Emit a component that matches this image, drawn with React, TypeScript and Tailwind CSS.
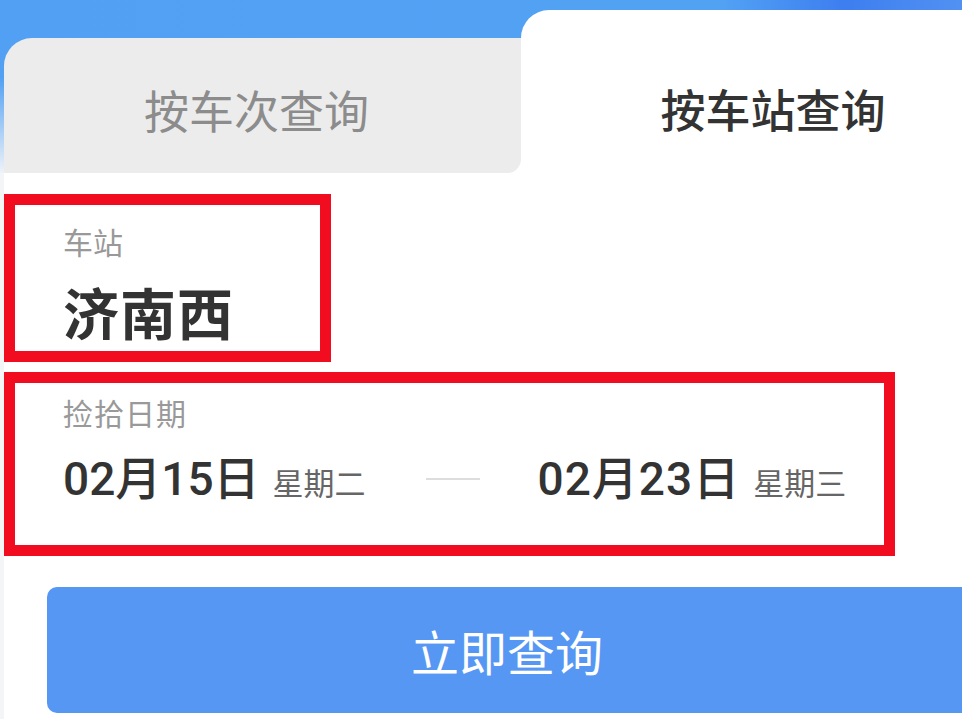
import React from "react";

const font = { fontFamily: '"Noto Sans CJK SC", "Noto Sans", sans-serif' };
const dateFont = { fontFamily: 'Roboto, "Noto Sans CJK SC", sans-serif' };

export default function App() {
  return (
    <div
      className="w-[962px] h-[719px] overflow-hidden bg-[#f4f5f7] relative"
      style={font}
    >
      {/* Header with tabs */}
      <div className="h-[173px] w-[1030px] flex items-end pl-[4px] bg-[linear-gradient(to_bottom,rgba(238,243,249,0)_45%,#eef3f9_100%),linear-gradient(to_right,#52a0f3_0%,#52a2f4_70%,#3d7ef0_82%,#4f8ff2_92%,#5d9ef3_100%)]">
        <div className="w-[517px] h-[135px] shrink-0 bg-[linear-gradient(to_bottom,transparent_50%,#ffffff_50%)]">
          <div className="h-full w-full bg-[#ececec] rounded-tl-[28px] rounded-br-[14px] flex items-end justify-center pb-[41px]">
            <span className="text-[45px] leading-[45px] text-[#8c8c8c] pl-[6px] pr-[18px]">
              按车次查询
            </span>
          </div>
        </div>
        <div className="w-[500px] h-[163px] shrink-0 bg-white rounded-tl-[28px] flex items-end justify-center pb-[42px]">
          <span className="text-[45px] leading-[45px] text-[#333333] font-medium pl-[4px]">
            按车站查询
          </span>
        </div>
      </div>

      {/* Body */}
      <div className="ml-[4px] w-[1016px] h-[546px] bg-white pt-[21px]">
        <div className="w-[327px] h-[168px] border-[11px] border-[#f20c1f] pl-[48px] pt-[21px]">
          <div className="text-[30px] leading-[30px] text-[#999999]">车站</div>
          <div className="mt-[27px] text-[56px] leading-[56px] font-bold text-[#333333] tracking-[1px]">
            济南西
          </div>
        </div>

        <div className="mt-[10px] w-[891px] h-[184px] border-[11px] border-[#f20c1f] pl-[48px] pt-[14px]">
          <div className="text-[30px] leading-[30px] text-[#999999] tracking-[1px]">捡拾日期</div>
          <div className="mt-[29px] flex items-baseline h-[46px]">
            <span
              className="text-[46px] leading-[46px] font-medium text-[#333333]"
              style={dateFont}
            >
              02月15日
            </span>
            <span className="ml-[13px] text-[31px] leading-[31px] text-[#666666]">星期二</span>
            <div className="self-center ml-[60px] w-[54px] h-[2px] bg-[#dddddd]" />
            <span
              className="ml-[58px] text-[46px] leading-[46px] font-medium text-[#333333] tracking-[1px]"
              style={dateFont}
            >
              02月23日
            </span>
            <span className="ml-[13px] text-[31px] leading-[31px] text-[#666666]">星期三</span>
          </div>
        </div>

        <div className="mt-[31px] ml-[43px] w-[926px] h-[126px] rounded-[10px] bg-[#5597f3] flex items-center justify-center">
          <span className="text-[48px] leading-[48px] text-white pr-[6px]">立即查询</span>
        </div>
      </div>
    </div>
  );
}
